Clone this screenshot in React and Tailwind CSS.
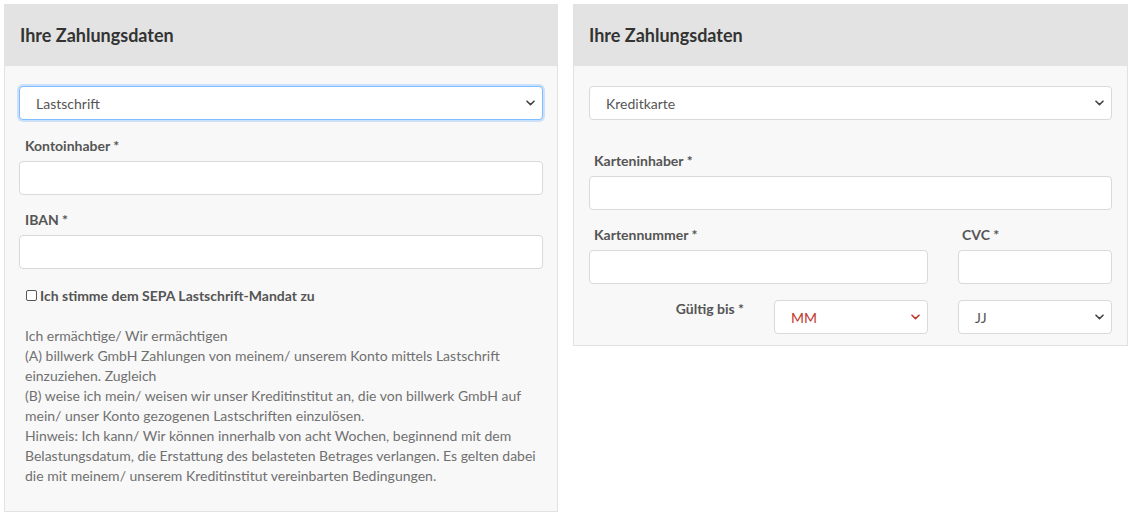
import React from "react";

const Chevron = ({ color = "#444" }) => (
  <svg className="pointer-events-none absolute right-[7px] top-1/2 -translate-y-1/2" width="9" height="6" viewBox="0 0 9 6">
    <path d="M1 1.2 L4.5 4.6 L8 1.2" fill="none" stroke={color} strokeWidth="1.6" strokeLinecap="round" strokeLinejoin="round" />
  </svg>
);

const Select = ({ label, focus, red, className = "" }) => (
  <div className={"relative h-[34px] rounded-[4px] bg-white " + (focus ? "border border-[#80bdff] shadow-[0_0_0_2px_rgba(0,123,255,0.18)] " : "border border-[#d9d9d9] ") + className}>
    <span className={"absolute left-[16px] top-1/2 -translate-y-1/2 text-[14px] " + (red ? "text-[#c0392b]" : "text-[#555]")}>{label}</span>
    <Chevron color={red ? "#c0392b" : "#444"} />
  </div>
);

const Input = ({ className = "" }) => (
  <div className={"h-[34px] rounded-[4px] border border-[#d9d9d9] bg-white " + className} />
);

const Label = ({ children, className = "" }) => (
  <div className={"h-[20px] text-[14px] font-bold leading-[20px] text-[#555] " + className}>{children}</div>
);

const Header = () => (
  <div className="flex h-[61px] items-center bg-[#e3e3e3] px-[15px] text-[18px] font-bold text-[#333]">
    Ihre Zahlungsdaten
  </div>
);

export default function App() {
  return (
    <div className="flex min-h-[516px] items-start gap-[15px] bg-white pl-[4px] pt-[4px] font-['Lato','Noto_Sans',sans-serif]">
      <div className="w-[554px] border border-[#e2e2e2] bg-[#f8f8f8]">
        <Header />
        <div className="px-[14px] pb-[25px] pt-[20px]">
          <Select label="Lastschrift" focus />
          <Label className="ml-[6px] mt-[16px]">Kontoinhaber *</Label>
          <Input className="mt-[5px]" />
          <Label className="ml-[6px] mt-[15px]">IBAN *</Label>
          <Input className="mt-[5px]" />
          <div className="ml-[7px] mt-[16px] flex h-[20px] items-center text-[14px] font-bold text-[#555]">
            <span className="mr-[3px] inline-block h-[11px] w-[11px] rounded-[2px] border border-[#555] bg-white" />
            Ich stimme dem SEPA Lastschrift-Mandat zu
          </div>
          <p className="ml-[6px] mt-[21px] text-[14px] leading-[20px] text-[#707070]">
            Ich ermächtige/ Wir ermächtigen
            <br />
            (A) billwerk GmbH Zahlungen von meinem/ unserem Konto mittels Lastschrift einzuziehen. Zugleich
            <br />
            (B) weise ich mein/ weisen wir unser Kreditinstitut an, die von billwerk GmbH auf mein/ unser Konto gezogenen Lastschriften einzulösen.
            <br />
            Hinweis: Ich kann/ Wir können innerhalb von acht Wochen, beginnend mit dem Belastungsdatum, die Erstattung des belasteten Betrages verlangen. Es gelten dabei die mit meinem/ unserem Kreditinstitut vereinbarten Bedingungen.
          </p>
        </div>
      </div>

      <div className="w-[555px] border border-[#e2e2e2] bg-[#f8f8f8]">
        <Header />
        <div className="px-[15px] pb-[11px] pt-[20px]">
          <Select label="Kreditkarte" />
          <Label className="ml-[5px] mt-[31px]">Karteninhaber *</Label>
          <Input className="mt-[5px]" />
          <div className="mt-[15px] grid grid-cols-[339px_154px] gap-x-[30px]">
            <Label className="ml-[5px]">Kartennummer *</Label>
            <Label className="ml-[4px]">CVC *</Label>
            <Input className="mt-[5px]" />
            <Input className="mt-[5px]" />
          </div>
          <div className="mt-[16px] grid grid-cols-[155px_154px_154px] gap-x-[30px]">
            <Label className="-mt-[1px] text-right">Gültig bis *</Label>
            <Select label="MM" red />
            <Select label="JJ" />
          </div>
        </div>
      </div>
    </div>
  );
}
